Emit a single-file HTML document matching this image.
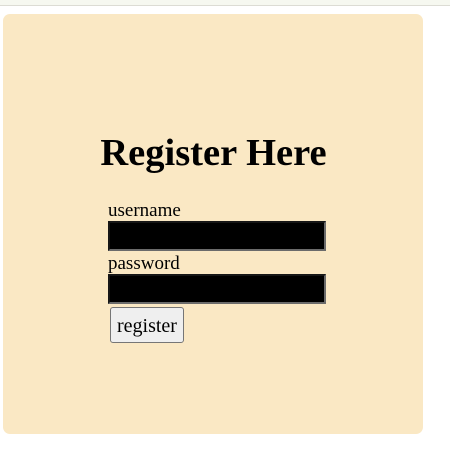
<!DOCTYPE html>
<html><head><style>
html,body{margin:0;padding:0;width:450px;height:452px;background:#fff;overflow:hidden;font-family:"Liberation Serif",serif;}
.top{position:absolute;left:0;top:0;width:450px;height:5px;background:#f6f8f0;border-bottom:1px solid #dcdcd4;}
.card{position:absolute;left:3px;top:14px;width:420px;height:420px;background:#fae8c4;border-radius:7px;}
h1{position:absolute;left:0;width:427px;text-align:center;top:131px;margin:0;font-size:38.5px;font-weight:bold;line-height:44px;}
.lbl{position:absolute;left:108px;font-size:19px;line-height:20px;}
.inp{position:absolute;left:108px;width:214px;height:26px;background:#000;border:2px solid #6b6b6b;border-style:inset;}
.btn{position:absolute;left:110px;top:307px;width:72px;height:34px;background:#efefef;border:1px solid #767676;border-radius:3px;font-size:20px;text-align:center;line-height:36px;}
</style></head><body>
<div class="top"></div>
<div class="card"></div>
<h1>Register Here</h1>
<div class="lbl" style="top:201px">username</div>
<div class="inp" style="top:221px"></div>
<div class="lbl" style="top:254px">password</div>
<div class="inp" style="top:274px"></div>
<div class="btn">register</div>
</body></html>
